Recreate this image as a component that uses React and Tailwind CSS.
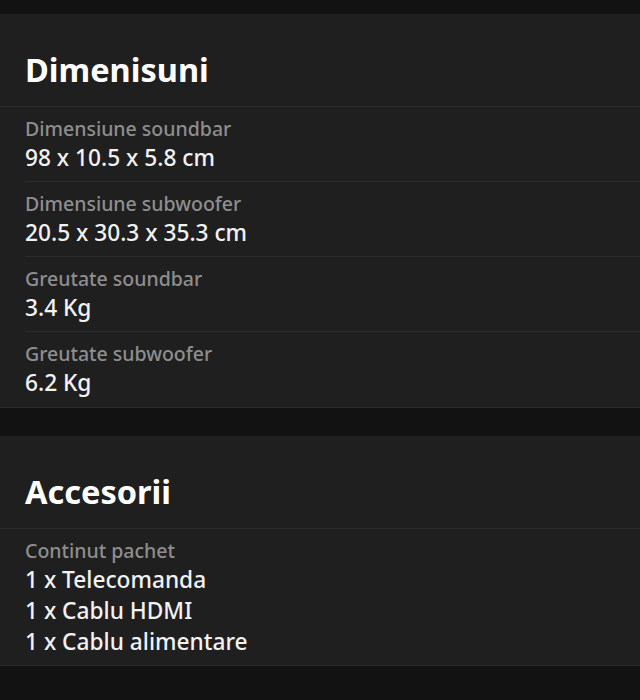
export default function App() {
  const font = { fontFamily: '"Noto Sans", "Open Sans", sans-serif' };
  const dims = [
    ["Dimensiune soundbar", "98 x 10.5 x 5.8 cm"],
    ["Dimensiune subwoofer", "20.5 x 30.3 x 35.3 cm"],
    ["Greutate soundbar", "3.4 Kg"],
    ["Greutate subwoofer", "6.2 Kg"],
  ];
  return (
    <div className="min-h-[700px] w-full bg-[#121212] pt-[14px] pb-[35px]" style={font}>
      <section className="bg-[#1f1f1f] border-b border-[#2c2c2c]">
        <div className="pl-[25px] pt-9 pb-4 border-b border-[#2c2c2c]">
          <h2 className="text-[32.5px] leading-[40px] font-bold text-white">Dimenisuni</h2>
        </div>
        <div className="pl-[25px]">
          {dims.map(([label, value], i) => (
            <div
              key={label}
              className={`pt-2 ${i < dims.length - 1 ? "pb-2 border-b border-[#2c2c2c]" : "pb-[9px]"}`}
            >
              <div className="text-[19.5px] leading-[27px] font-medium text-[#8e8e8e]">{label}</div>
              <div className="text-[22.7px] leading-[31px] font-medium text-[#f2f2f2]">{value}</div>
            </div>
          ))}
        </div>
      </section>
      <div className="h-[28px]" />
      <section className="bg-[#1f1f1f] border-b border-[#2c2c2c]">
        <div className="pl-[25px] pt-9 pb-4 border-b border-[#2c2c2c]">
          <h2 className="text-[32.5px] leading-[40px] font-bold text-white">Accesorii</h2>
        </div>
        <div className="pl-[25px] pt-2 pb-2">
          <div className="text-[19.5px] leading-[27px] font-medium text-[#8e8e8e]">Continut pachet</div>
          <div className="text-[22.7px] leading-[31px] font-medium text-[#f2f2f2]">1 x Telecomanda</div>
          <div className="text-[22.7px] leading-[31px] font-medium text-[#f2f2f2]">1 x Cablu HDMI</div>
          <div className="text-[22.7px] leading-[31px] font-medium text-[#f2f2f2]">1 x Cablu alimentare</div>
        </div>
      </section>
    </div>
  );
}
